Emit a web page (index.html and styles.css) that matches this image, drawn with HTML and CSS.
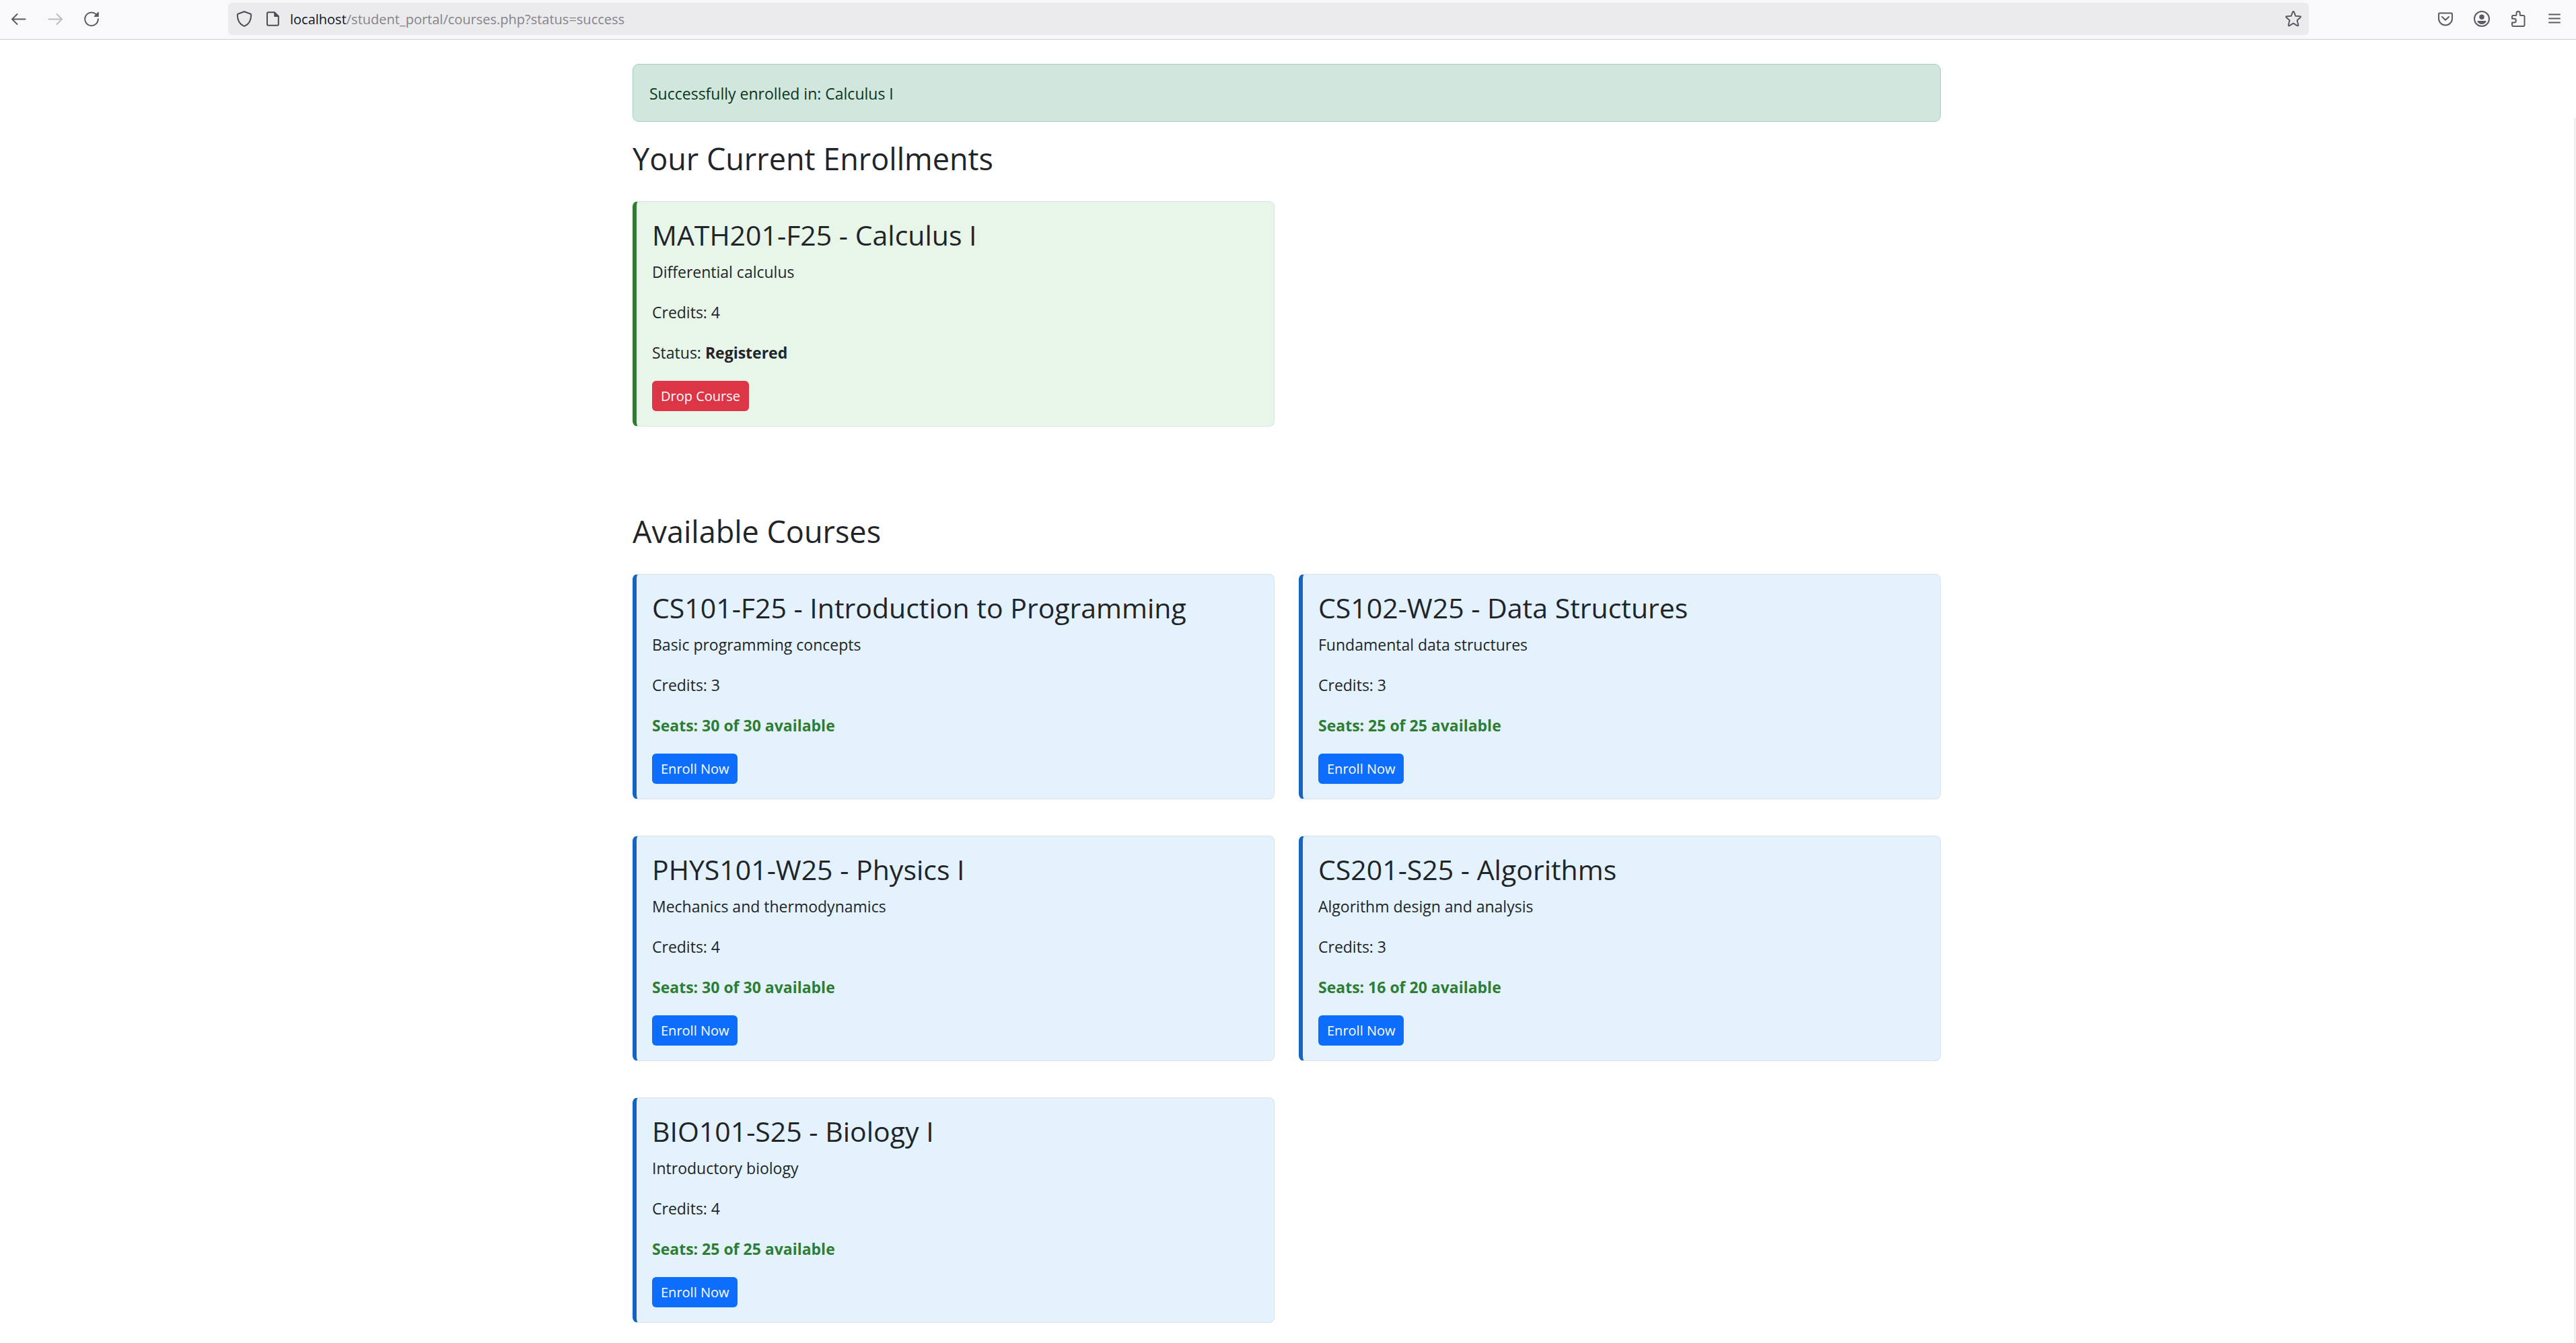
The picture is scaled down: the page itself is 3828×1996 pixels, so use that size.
FILE: index.html
```html
<!DOCTYPE html>
<html lang="en">
<head>
<meta charset="utf-8">
<meta name="viewport" content="width=device-width, initial-scale=1">
<title>Courses</title>
<link rel="stylesheet" href="styles.css">
</head>
<body>
<header class="toolbar">
  <nav class="tools" aria-label="Navigation">
    <button class="tool" type="button" aria-label="Back"><svg class="icon" viewBox="0 0 24 24"><path class="line" d="M2.500 12.500H21.500M9.500 5L2 12.500L9.500 20"/></svg></button>
    <button class="tool" type="button" aria-label="Forward" disabled><svg class="icon" viewBox="0 0 24 24"><path class="line" d="M2.500 12.500H21.500M14.500 5L22 12.500L14.500 20"/></svg></button>
    <button class="tool" type="button" aria-label="Reload"><svg class="icon" viewBox="0 0 24 24"><path class="line" d="M21.800 12.300A9.800 9.800 0 1 1 18.500 5"/><path class="solid" d="M22.800 2.500V9H16.500Q15 9 16 7.800L21.300 2.200Q22.800 1 22.800 2.500Z"/></svg></button>
  </nav>
  <div class="urlbar">
    <svg class="icon url-icon" viewBox="0 0 24 24"><path class="line" d="M12 1.200L21.500 4.800Q22.200 5.100 22.200 5.900C22.200 14 19.500 19.500 12.700 22.600Q12 22.900 11.300 22.600C4.500 19.500 1.800 14 1.800 5.900Q1.800 5.100 2.500 4.800Z"/></svg>
    <svg class="icon url-icon" viewBox="0 0 24 24"><path class="line" d="M6 2.200H14.500L20.800 8.500V20Q20.800 21.800 19 21.800H6Q4 21.800 4 20V4Q4 2.200 6 2.200Z"/><path class="solid" d="M14.200 1.500H15.500L21.500 7.500V9H15.500Q14.200 9 14.200 7.700Z"/></svg>
    <div class="address">
      <label class="host" for="url">localhost</label><input class="path" id="url" type="text" value="/student_portal/courses.php?status=success">
    </div>
    <button class="bookmark" type="button" aria-label="Bookmark this page"><svg class="icon" viewBox="0 0 24 24"><path class="line" d="M11 1.900Q12 .3 13 1.900L15.300 7.800L21.800 8.200Q23.800 8.500 22.300 10L17.600 14.200L19.300 21Q19.500 23 17.700 22.200L12 18.700L6.300 22.200Q4.500 23 4.700 21L6.400 14.200L1.700 10Q.2 8.500 2.200 8.200L8.700 7.800Z"/></svg></button>
  </div>
  <div class="tools">
    <button class="tool" type="button" aria-label="Save to Pocket"><svg class="icon" viewBox="0 0 24 24"><path class="line" d="M3.500 3.500H20.500Q22 3.500 22 5V11.500A10 10 0 0 1 2 11.500V5Q2 3.500 3.500 3.500ZM7 9L12 13.800L17 9"/></svg></button>
    <button class="tool" type="button" aria-label="Account"><svg class="icon" viewBox="0 0 24 24"><circle class="line" cx="12" cy="12" r="11"/><circle class="solid" cx="12" cy="9.300" r="3.700"/><path class="solid" d="M6.500 15H17.500Q19 15 18.400 16.300Q16.500 20 12 20Q7.500 20 5.600 16.300Q5 15 6.500 15Z"/></svg></button>
    <button class="tool" type="button" aria-label="Extensions"><svg class="icon" viewBox="0 0 24 24"><path class="line" d="M4.500 7H8.500Q9.500 7 9.500 6V3.500A2.600 2.600 0 0 1 14.700 3.500V6Q14.700 7 15.700 7H19.500Q21.500 7 21.500 9V21Q21.500 23 19.500 23H5Q3 23 3 21V17.500H6A2.900 2.900 0 0 0 6 11.700H3V8.500Q3 7 4.500 7Z"/></svg></button>
    <button class="tool" type="button" aria-label="Menu"><svg class="icon" viewBox="0 0 24 24"><path class="line" d="M4 5.500H20M4 11.500H20M4 17.500H20"/></svg></button>
  </div>
</header>
<div class="viewport">
<main class="container">
  <div class="alert" role="alert">Successfully enrolled in: Calculus I</div>

  <section class="section">
    <h2 class="section-title">Your Current Enrollments</h2>
    <div class="courses">
      <article class="card enrolled">
        <h3 class="card-title">MATH201-F25 - Calculus I</h3>
        <p class="text">Differential calculus</p>
        <p class="text">Credits: 4</p>
        <p class="text">Status: <strong>Registered</strong></p>
        <button class="btn btn-danger" type="button">Drop Course</button>
      </article>
    </div>
  </section>

  <section class="section">
    <h2 class="section-title">Available Courses</h2>
    <div class="courses">
      <article class="card available">
        <h3 class="card-title">CS101-F25 - Introduction to Programming</h3>
        <p class="text">Basic programming concepts</p>
        <p class="text">Credits: 3</p>
        <p class="text seats">Seats: 30 of 30 available</p>
        <button class="btn btn-primary" type="button">Enroll Now</button>
      </article>
      <article class="card available">
        <h3 class="card-title">CS102-W25 - Data Structures</h3>
        <p class="text">Fundamental data structures</p>
        <p class="text">Credits: 3</p>
        <p class="text seats">Seats: 25 of 25 available</p>
        <button class="btn btn-primary" type="button">Enroll Now</button>
      </article>
      <article class="card available">
        <h3 class="card-title">PHYS101-W25 - Physics I</h3>
        <p class="text">Mechanics and thermodynamics</p>
        <p class="text">Credits: 4</p>
        <p class="text seats">Seats: 30 of 30 available</p>
        <button class="btn btn-primary" type="button">Enroll Now</button>
      </article>
      <article class="card available">
        <h3 class="card-title">CS201-S25 - Algorithms</h3>
        <p class="text">Algorithm design and analysis</p>
        <p class="text">Credits: 3</p>
        <p class="text seats">Seats: 16 of 20 available</p>
        <button class="btn btn-primary" type="button">Enroll Now</button>
      </article>
      <article class="card available">
        <h3 class="card-title">BIO101-S25 - Biology I</h3>
        <p class="text">Introductory biology</p>
        <p class="text">Credits: 4</p>
        <p class="text seats">Seats: 25 of 25 available</p>
        <button class="btn btn-primary" type="button">Enroll Now</button>
      </article>
    </div>
  </section>
</main>
<div class="scrollbar"><div class="thumb"></div></div>
</div>
</body>
</html>
```
FILE: styles.css
```css
* { box-sizing: border-box; }

body {
  margin: 0;
  min-height: 100vh;
  display: flex;
  flex-direction: column;
  background: #fff;
  color: #212529;
  font-family: "Open Sans", "Noto Sans", sans-serif;
  font-size: 23px;
  line-height: 36px;
}

h2, h3, p { margin: 0; font-weight: 400; }
button, input { font: inherit; }

/* Browser toolbar */
.toolbar {
  display: flex;
  align-items: center;
  gap: 176px;
  padding: 4px 5px 6px 1px;
  background: #f9f9fb;
  border-bottom: 1px solid #cccccf;
}
.tools { display: flex; }
.tool, .bookmark {
  display: flex;
  align-items: center;
  justify-content: center;
  height: 48px;
  padding: 0;
  border: 0;
  background: none;
  color: #5b5b66;
}
.tool { width: 54px; }
.tool:disabled { color: #bdbdc2; }
.bookmark { width: 46px; }
.icon { width: 24px; height: 24px; flex: none; }
.line {
  fill: none;
  stroke: currentColor;
  stroke-width: 2;
  stroke-linecap: round;
  stroke-linejoin: round;
}
.solid { fill: currentColor; }

.urlbar {
  flex: 1;
  min-width: 0;
  display: flex;
  align-items: center;
  gap: 18px;
  height: 48px;
  padding-left: 12px;
  border-radius: 6px;
  background: #ebebed;
}
.url-icon { color: #4c4c55; }
.address {
  flex: 1;
  min-width: 0;
  display: flex;
  align-items: center;
  margin-left: -4px;
  padding-top: 2px;
  font-size: 20px;
  line-height: 28px;
}
.host { color: #15141a; }
.path {
  flex: 1;
  min-width: 0;
  padding: 0;
  border: 0;
  outline: 0;
  background: none;
  color: #84848a;
}

/* Page */
.viewport { flex: 1; display: flex; }
.container {
  flex: 1;
  max-width: 1980px;
  margin: 0 auto;
  padding: 36px 18px 0;
}
.scrollbar { width: 4px; padding: 116px 0 0 1px; display: flex; }
.thumb { flex: 1; background: #f0f0f0; }

.alert {
  margin-bottom: 24px;
  padding: 25px 24px 23px;
  border: 1px solid #a3cfbb;
  border-radius: 9px;
  background: #d1e7dd;
  color: #0a3622;
}
.section { margin-bottom: 125px; }
.section:last-child { margin-bottom: 0; }
.section-title {
  margin-bottom: 32px;
  font-size: 45px;
  line-height: 62px;
}
.courses {
  display: grid;
  grid-template-columns: 1fr 1fr;
  gap: 54px 36px;
}
.card {
  padding: 24px 23px 22px;
  border: 1px solid #dee2e6;
  border-left-width: 6px;
  border-radius: 8px;
}
.enrolled { background: #e8f5e9; border-left-color: #2e7d32; }
.available { background: #e3f2fd; border-left-color: #1565c0; }
.card-title {
  margin-bottom: 12px;
  font-size: 41px;
  line-height: 50px;
}
.text { margin-bottom: 24px; }
.seats { color: #2e7d32; font-weight: 700; }
.btn {
  display: block;
  padding: 6px 13px;
  border: 0;
  border-radius: 6px;
  color: #fff;
  font-size: 20px;
  line-height: 33px;
}
.btn-primary { background: #0d6efd; }
.btn-danger { background: #dc3545; }
```
